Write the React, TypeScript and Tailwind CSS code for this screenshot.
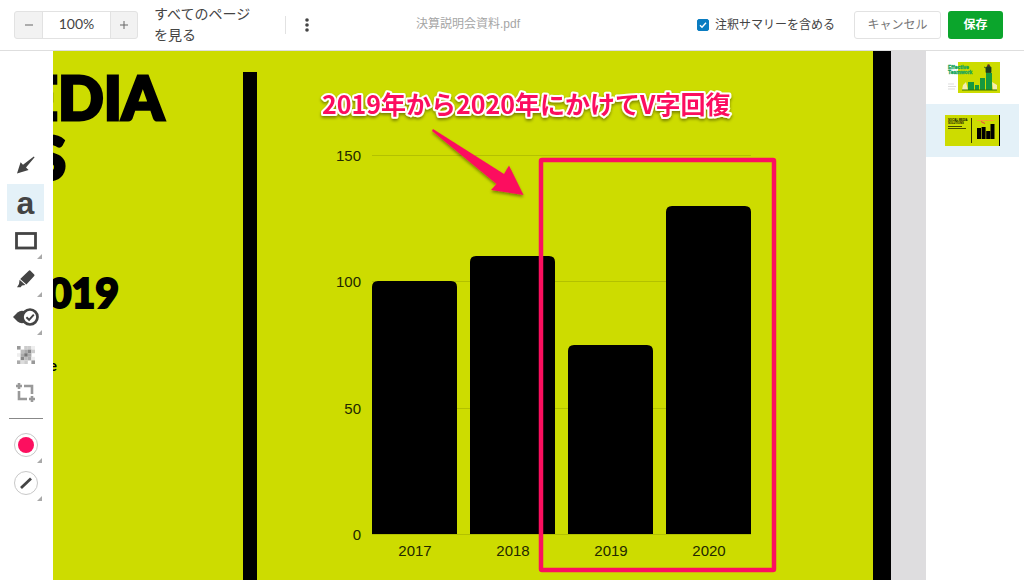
import React from "react";

const pageFont = "font-['Liberation_Sans','Noto_Sans_CJK_JP',sans-serif]";

function Corner() {
  return (
    <svg className="absolute right-0.5 bottom-0 h-[5px] w-[5px]" viewBox="0 0 5 5" aria-hidden="true">
      <path d="M5 0v5H0z" fill="#a9a9a9" />
    </svg>
  );
}

type ToolProps = {
  label: string;
  active?: boolean;
  menu?: boolean;
  children: React.ReactNode;
};

function Tool({ label, active, menu, children }: ToolProps) {
  return (
    <button
      type="button"
      aria-label={label}
      aria-pressed={active ?? false}
      className={
        active
          ? "relative flex size-[37px] items-center justify-center bg-[#e4f1f8]"
          : "relative flex size-[37px] items-center justify-center"
      }
    >
      {children}
      {menu && <Corner />}
    </button>
  );
}

const mosaic: [number, number, string][] = [
  [0, 0, "#999"], [2, 0, "#ccc"], [3, 0, "#ccc"], [4, 0, "#eee"],
  [1, 1, "#bbb"], [2, 1, "#aaa"], [3, 1, "#888"], [4, 1, "#ccc"],
  [0, 2, "#eee"], [1, 2, "#aaa"], [2, 2, "#777"], [3, 2, "#aaa"],
  [1, 3, "#888"], [2, 3, "#bbb"], [3, 3, "#aaa"], [4, 3, "#eee"],
  [0, 4, "#aaa"], [1, 4, "#ddd"], [2, 4, "#ccc"], [4, 4, "#999"],
];

function Toolbar() {
  return (
    <nav aria-label="注釈ツール" className="flex w-[53px] shrink-0 flex-col items-center gap-px bg-white pt-[95px] pr-[2px]">
      <Tool label="矢印">
        <svg width="18" height="18" viewBox="0 0 18 18">
          <path d="M0 17.5 3.6 6.2 6 8.8 16.8 0.4 17.6 1.2 9 11.6 11.6 14z" fill="#444" />
        </svg>
      </Tool>
      <Tool label="テキスト" active>
        <span className="text-[32px] leading-7 font-bold text-[#444]">a</span>
      </Tool>
      <Tool label="図形" menu>
        <svg width="22" height="18" viewBox="0 0 22 18">
          <rect x="1.5" y="1.5" width="19" height="14.5" fill="none" stroke="#444" strokeWidth="2.8" />
        </svg>
      </Tool>
      <Tool label="マーカー" menu>
        <svg width="18" height="18" viewBox="0 0 18 18">
          <path d="M13.2 0.6 17.2 4.4Q17.9 5.2 17.2 6L9.4 14.4 3.2 9 11.8 0.8Q12.5 0 13.2 0.600z" fill="#444" />
          <path d="M2.600 9.800 8.400 15 5 15.600 3.600 17.200H0L2 14z" fill="#444" />
        </svg>
      </Tool>
      <Tool label="スタンプ" menu>
        <svg width="26" height="20" viewBox="0 0 26 20">
          <path d="M0 10 4.500 5.400Q8 2.800 12 4.500V15.500Q8 17.200 4.500 14.600z" fill="#444" />
          <circle cx="17" cy="10" r="7.500" fill="#fff" stroke="#444" strokeWidth="2.700" />
          <path d="m13.400 10.200 2.700 2.600 4.700-5.200" fill="none" stroke="#444" strokeWidth="1.900" />
        </svg>
      </Tool>
      <Tool label="モザイク">
        <svg width="18" height="18" viewBox="0 0 20 20">
          {mosaic.map(([x, y, c]) => (
            <rect key={`${x}-${y}`} x={x * 4} y={y * 4} width="4" height="4" fill={c} />
          ))}
        </svg>
      </Tool>
      <Tool label="切り抜き">
        <svg width="19" height="19" viewBox="0 0 19 19" fill="none" stroke="#999" strokeWidth="2.600">
          <path d="M8 3h8v8M3 8V16h8M0 3h6M3 0v6M13 16h6M16 13v6" />
        </svg>
      </Tool>
      <hr className="my-1.5 w-[34px] border-[#888]" />
      <Tool label="色" menu>
        <span className="flex size-6 items-center justify-center rounded-full border border-[#c8c8c8] bg-white">
          <span className="size-4 rounded-full bg-[#fc0f5f]" />
        </span>
      </Tool>
      <Tool label="線の太さ" menu>
        <span className="flex size-6 items-center justify-center rounded-full border border-[#c8c8c8] bg-white">
          <svg width="14" height="14" viewBox="0 0 14 14">
            <path d="M2 12 12 2.500" stroke="#444" strokeWidth="2.800" />
          </svg>
        </span>
      </Tool>
    </nav>
  );
}

function Header() {
  return (
    <header className="flex h-[51px] shrink-0 items-center border-b border-[#dedede] bg-white pr-[21px] pl-[14px] text-xs text-[#444]">
      <div className="flex h-7 shrink-0 overflow-hidden rounded-[3px] border border-[#e2e2e2] bg-[#f2f2f2]">
        <button type="button" aria-label="縮小" className="flex w-[27px] items-center justify-center">
          <svg width="8" height="8" viewBox="0 0 8 8"><path d="M0 4h8" stroke="#666" /></svg>
        </button>
        <output className="w-[69px] border-x border-[#e2e2e2] bg-white text-center font-[Lato,sans-serif] text-sm leading-6">100%</output>
        <button type="button" aria-label="拡大" className="flex w-[26px] items-center justify-center">
          <svg width="8" height="8" viewBox="0 0 8 8"><path d="M0 4h8M4 0v8" stroke="#666" /></svg>
        </button>
      </div>
      <button type="button" className="ml-4 w-[102px] shrink-0 text-left text-sm leading-[21px]">すべてのページを見る</button>
      <span className="ml-[29px] h-[18px] w-px shrink-0 bg-[#e2e2e2]" />
      <button type="button" aria-label="メニュー" className="ml-[15px] flex h-7 w-3 shrink-0 items-center justify-center">
        <svg width="4" height="14" viewBox="0 0 4 14" fill="#444">
          <circle cx="2" cy="2" r="1.800" />
          <circle cx="2" cy="7" r="1.800" />
          <circle cx="2" cy="12" r="1.800" />
        </svg>
      </button>
      <h1 className="ml-[103px] flex-1 pb-[2px] whitespace-nowrap text-[#a5a5a5]">決算説明会資料.pdf</h1>
      <label className="flex shrink-0 items-center gap-[6px] whitespace-nowrap">
        <span className="relative flex size-3">
          <input type="checkbox" defaultChecked className="peer size-3 appearance-none rounded-[2px] border border-[#0a7cc1] bg-white checked:bg-[#0a7cc1]" />
          <svg className="pointer-events-none absolute inset-0 hidden peer-checked:block" width="12" height="12" viewBox="0 0 12 12">
            <path d="m3 6.200 2 2L9 3.800" fill="none" stroke="#fff" strokeWidth="1.400" />
          </svg>
        </span>
        注釈サマリーを含める
      </label>
      <button type="button" className="ml-[19px] h-7 w-[87px] shrink-0 rounded-[3px] border border-[#e2e2e2] text-[#777]">キャンセル</button>
      <button type="button" className="ml-[7px] h-7 w-[55px] shrink-0 rounded-[3px] bg-[#0ba52c] font-bold text-white">保存</button>
    </header>
  );
}

const bars = [
  { year: "2017", x: 372, top: 281 },
  { year: "2018", x: 470, top: 256 },
  { year: "2019", x: 568, top: 345 },
  { year: "2020", x: 666, top: 206 },
];

const ticks = [
  { value: "150", y: 155 },
  { value: "100", y: 281 },
  { value: "50", y: 408 },
  { value: "0", y: 534 },
];

function Chart() {
  return (
    <svg className="shrink-0" width="616" height="529" viewBox="257 51 616 529" role="img" aria-label="売上グラフ">
      <defs>
        <filter id="lift" x="-10%" y="-20%" width="120%" height="150%">
          <feDropShadow dx="0" dy="2" stdDeviation="1.500" floodColor="#000" floodOpacity="0.4" />
        </filter>
      </defs>
      {ticks.map((t) => (
        <g key={t.value}>
          <path d={`M372 ${t.y + 0.5}H751`} stroke="#b3c100" />
          <text x="361" y={t.y + 6} textAnchor="end" fontSize="15" fill="#222800">{t.value}</text>
        </g>
      ))}
      {bars.map((b) => (
        <g key={b.year}>
          <path d={`M${b.x} 534V${b.top + 6}q0-6 6-6h73q6 0 6 6V534z`} fill="#000" />
          <text x={b.x + 43} y="556" textAnchor="middle" fontSize="15" fill="#222800">{b.year}</text>
        </g>
      ))}
      <rect x="541" y="160" width="233" height="410" rx="1" fill="none" stroke="#fc0f5f" strokeWidth="4.500" />
      <path d="M433 129 504 174 509 165.500 523.500 195 491 190 496.500 184 432 131z" fill="#fc0f5f" filter="url(#lift)" />
      <text
        className="font-['Noto_Sans_CJK_JP',sans-serif]"
        x="322" y="114" fontSize="25" fontWeight="700" fill="#fc0f5f" stroke="#fff" strokeWidth="4"
        strokeLinejoin="round" paintOrder="stroke" filter="url(#lift)"
      >
        2019年から2020年にかけてV字回復
      </text>
    </svg>
  );
}

function Slide() {
  return (
    <main className="flex min-w-0 flex-1 bg-[#dedddf] pr-[35px]">
      <article className="flex min-w-0 flex-1 overflow-hidden border-r-[18px] border-black bg-[#cddc00] text-black">
        <div className="w-[190px] shrink-0 overflow-hidden font-[Lato,sans-serif] font-black">
          <p className="mt-4 flex h-[60px] w-[111px] items-center justify-end text-[60px] leading-none [-webkit-text-stroke:3px_black]">EDIA</p>
          <p className="flex h-[60px] w-[13px] items-center justify-end text-[60px] leading-none [-webkit-text-stroke:3px_black]">S</p>
          <p className="mt-[85px] flex h-10 w-[66px] items-center justify-end text-[41px] leading-none [-webkit-text-stroke:2px_black]">2019</p>
          <p className="mt-[43px] flex h-5 w-1 items-center justify-end text-base leading-none font-bold">e</p>
        </div>
        <span className="mt-[21px] w-[14px] shrink-0 bg-black" />
        <Chart />
      </article>
    </main>
  );
}

function Pages() {
  return (
    <aside aria-label="ページ一覧" className="w-[98px] shrink-0 bg-white pr-[5px]">
      <button type="button" aria-label="1ページ" className="flex h-[53px] w-full items-center justify-center">
        <svg width="55" height="31" viewBox="0 0 55 31">
          <path d="M13 0h42v31H13z" fill="#cddc00" />
          <text x="3" y="6.500" fontSize="5" fontWeight="700" fill="#16a45c" stroke="#16a45c" strokeWidth="0.300">Effective</text>
          <text x="3" y="12" fontSize="5" fontWeight="700" fill="#16a45c" stroke="#16a45c" strokeWidth="0.300">Teamwork</text>
          <path d="M3 22h6M3 24.500h8M3 27h7" stroke="#ddd" />
          <path d="M23 20h6v8h-6zM30 23h4v5h-4zM35 16h5v12h-5zM41 11h6v17h-6z" fill="#16983f" />
          <path d="m17 28 1-5 3-3 2 8zM48 28l-1-8 5 3v5z" fill="#f4edb0" />
          <path d="M17 28h35" stroke="#397300" />
          <path d="M41 5.500v5h5V5.500l-2-2zM39 5l4 2" fill="#193b20" stroke="#193b20" strokeWidth="0.800" />
          <circle cx="43.500" cy="3.500" r="1.300" fill="#5c3226" />
        </svg>
      </button>
      <button type="button" aria-label="2ページ" aria-current="page" className="flex h-[53px] w-full items-center justify-center bg-[#e4f1f8]">
        <svg width="55" height="31" viewBox="0 0 55 31">
          <path d="M0 0h55v31H0z" fill="#cddc00" />
          <path d="M54 0h1v31h-1z" fill="#000" />
          <text x="3" y="5.500" fontSize="2.700" fontWeight="700">SOCIAL MEDIA</text>
          <text x="3" y="8.500" fontSize="2.700" fontWeight="700">SOLUTIONS</text>
          <path d="M3 11.500h14M3 13.500h18" stroke="#353a00" strokeWidth="0.900" />
          <path d="M26.500 3v25" stroke="#353a00" />
          <path d="M32 13h4v11h-4zM36.600 12h4v12h-4zM41.200 16h4v8h-4zM45.500 9h4v15h-4z" />
          <path d="M32 5.500h17" stroke="#ff9b38" strokeWidth="0.800" />
          <path d="m36 6.500 4 2" stroke="#fc0f5f" strokeWidth="0.800" />
        </svg>
      </button>
    </aside>
  );
}

export default function App() {
  return (
    <div className={`flex h-screen flex-col overflow-hidden bg-white ${pageFont}`}>
      <Header />
      <div className="flex min-h-0 flex-1">
        <Toolbar />
        <Slide />
        <Pages />
      </div>
    </div>
  );
}
